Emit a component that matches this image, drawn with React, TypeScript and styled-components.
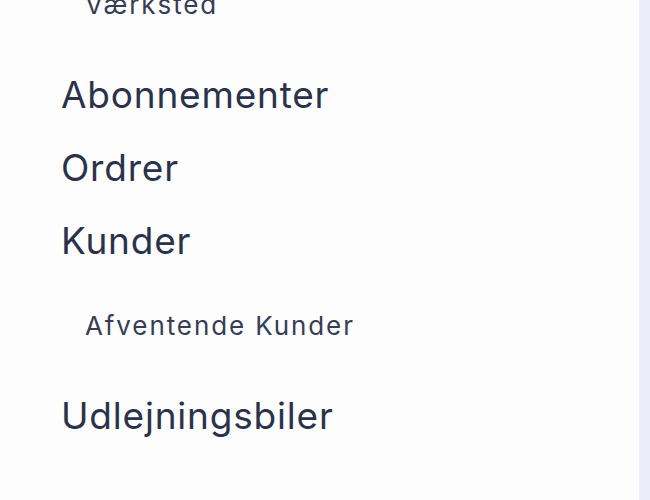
import React from 'react'
import styled, { createGlobalStyle } from 'styled-components'

const GlobalStyle = createGlobalStyle`
  html, body {
    margin: 0;
    padding: 0;
    height: 100%;
    overflow: hidden;
  }
  body {
    font-family: Inter, "Open Sans", sans-serif;
    background: #ebeefa;
  }
`

type Item = {
  label: string
  sub?: boolean
}

const items: Item[] = [
  { label: 'Værksted', sub: true },
  { label: 'Abonnementer' },
  { label: 'Ordrer' },
  { label: 'Kunder' },
  { label: 'Afventende Kunder', sub: true },
  { label: 'Udlejningsbiler' },
]

export default function App() {
  return (
    <>
      <GlobalStyle />
      <Layout>
        <Sidebar>
          <NavList>
            {items.map(item => (
              <NavItem key={item.label} sub={item.sub}>
                {item.label}
              </NavItem>
            ))}
          </NavList>
        </Sidebar>
        <Content />
      </Layout>
    </>
  )
}

const Layout = styled.div`
  display: flex;
  width: 650px;
  height: 500px;
`

const Sidebar = styled.nav`
  width: 639px;
  height: 100%;
  background: #fdfdfd;
  overflow: hidden;
`

const NavList = styled.ul`
  list-style: none;
  margin: -44px 0 0;
  padding: 0 0 0 61px;
  display: flex;
  flex-direction: column;
`

const NavItem = styled.li<{ sub?: boolean }>`
  font-size: ${props => (props.sub ? '26px' : '37px')};
  line-height: ${props => (props.sub ? '40px' : '73px')};
  letter-spacing: ${props => (props.sub ? '1.9px' : '0.8px')};
  padding: ${props => (props.sub ? '29px 0 33px 24px' : '0')};
  color: ${props => (props.sub ? '#363d55' : '#2b334c')};
  font-weight: 400;
  white-space: nowrap;
`

const Content = styled.main`
  flex: 1;
  background: #ebeefa;
`
